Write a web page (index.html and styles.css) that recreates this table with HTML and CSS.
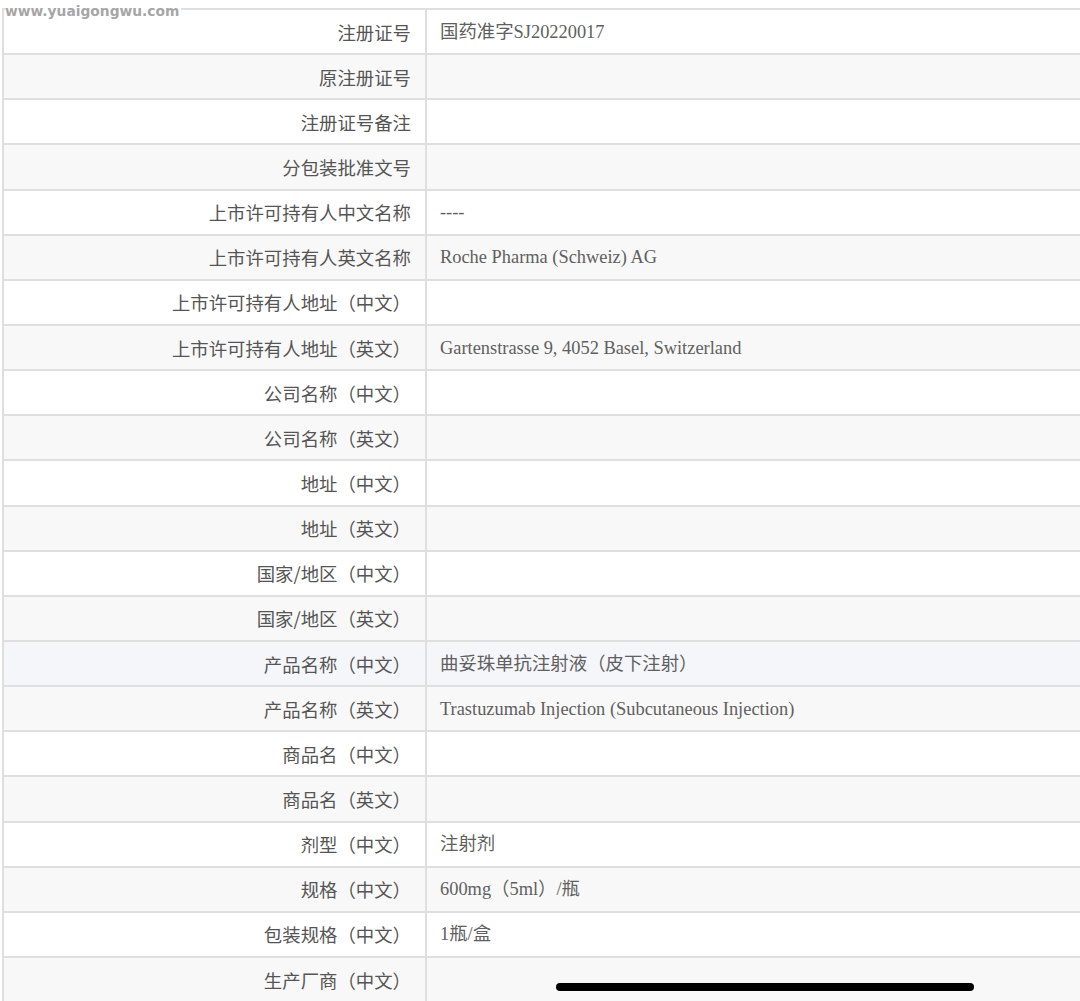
FILE: index.html
```html
<!DOCTYPE html>
<html lang="zh-CN">
<head>
<meta charset="utf-8">
<title>注册信息</title>
<link rel="stylesheet" href="styles.css">
</head>
<body>
<div class="page">
  <div class="watermark">www.yuaigongwu.com</div>
  <table class="info">
    <colgroup><col class="c-label"><col class="c-value"></colgroup>
    <tbody>
      <tr><th>注册证号</th><td>国药准字SJ20220017</td></tr>
      <tr><th>原注册证号</th><td></td></tr>
      <tr><th>注册证号备注</th><td></td></tr>
      <tr><th>分包装批准文号</th><td></td></tr>
      <tr><th>上市许可持有人中文名称</th><td>----</td></tr>
      <tr><th>上市许可持有人英文名称</th><td>Roche Pharma (Schweiz) AG</td></tr>
      <tr><th>上市许可持有人地址（中文）</th><td></td></tr>
      <tr><th>上市许可持有人地址（英文）</th><td>Gartenstrasse 9, 4052 Basel, Switzerland</td></tr>
      <tr><th>公司名称（中文）</th><td></td></tr>
      <tr><th>公司名称（英文）</th><td></td></tr>
      <tr><th>地址（中文）</th><td></td></tr>
      <tr><th>地址（英文）</th><td></td></tr>
      <tr><th>国家/地区（中文）</th><td></td></tr>
      <tr><th>国家/地区（英文）</th><td></td></tr>
      <tr class="hover"><th>产品名称（中文）</th><td>曲妥珠单抗注射液（皮下注射）</td></tr>
      <tr><th>产品名称（英文）</th><td>Trastuzumab Injection (Subcutaneous Injection)</td></tr>
      <tr><th>商品名（中文）</th><td></td></tr>
      <tr><th>商品名（英文）</th><td></td></tr>
      <tr><th>剂型（中文）</th><td>注射剂</td></tr>
      <tr><th>规格（中文）</th><td>600mg（5ml）/瓶</td></tr>
      <tr><th>包装规格（中文）</th><td>1瓶/盒</td></tr>
      <tr><th>生产厂商（中文）</th><td></td></tr>
    </tbody>
  </table>
  <div class="home-indicator"></div>
</div>
</body>
</html>
```

FILE: styles.css
```css
html, body {
  margin: 0;
  padding: 0;
  background: #ffffff;
}

.page {
  position: relative;
  width: 1080px;
  height: 1001px;
  overflow: hidden;
  padding-top: 8px;
  box-sizing: border-box;
}

.info {
  border-collapse: collapse;
  width: 1120px;
  margin-left: 2px;
  table-layout: fixed;
}

.c-label { width: 423px; }

.info tr { height: 45.15px; }

.info tr:nth-child(even) { background: #f8f8f8; }
.info tr.hover { background: #f5f6fa; }

.info th,
.info td {
  border: 2px solid #dfdfdf;
  padding: 0;
  vertical-align: middle;
  color: #555555;
  font-size: 18.4px;
  line-height: 24px;
}

.info th {
  font-family: "Noto Sans CJK SC", "Noto Sans", sans-serif;
  font-weight: normal;
  text-align: right;
  padding-right: 14px;
}

.info td {
  font-family: "Liberation Serif", "Noto Sans CJK SC", serif;
  text-align: left;
  padding-left: 13px;
  color: #606060;
}

.watermark {
  position: absolute;
  top: 4px;
  left: 5px;
  padding-right: 2px;
  background: #ffffff;
  font-family: "DejaVu Sans", sans-serif;
  font-weight: bold;
  font-size: 13.8px;
  line-height: 14px;
  color: #a6a6a6;
  white-space: nowrap;
}

.home-indicator {
  position: absolute;
  left: 556px;
  top: 983px;
  width: 418px;
  height: 8px;
  border-radius: 4px;
  background: #000000;
}
```
